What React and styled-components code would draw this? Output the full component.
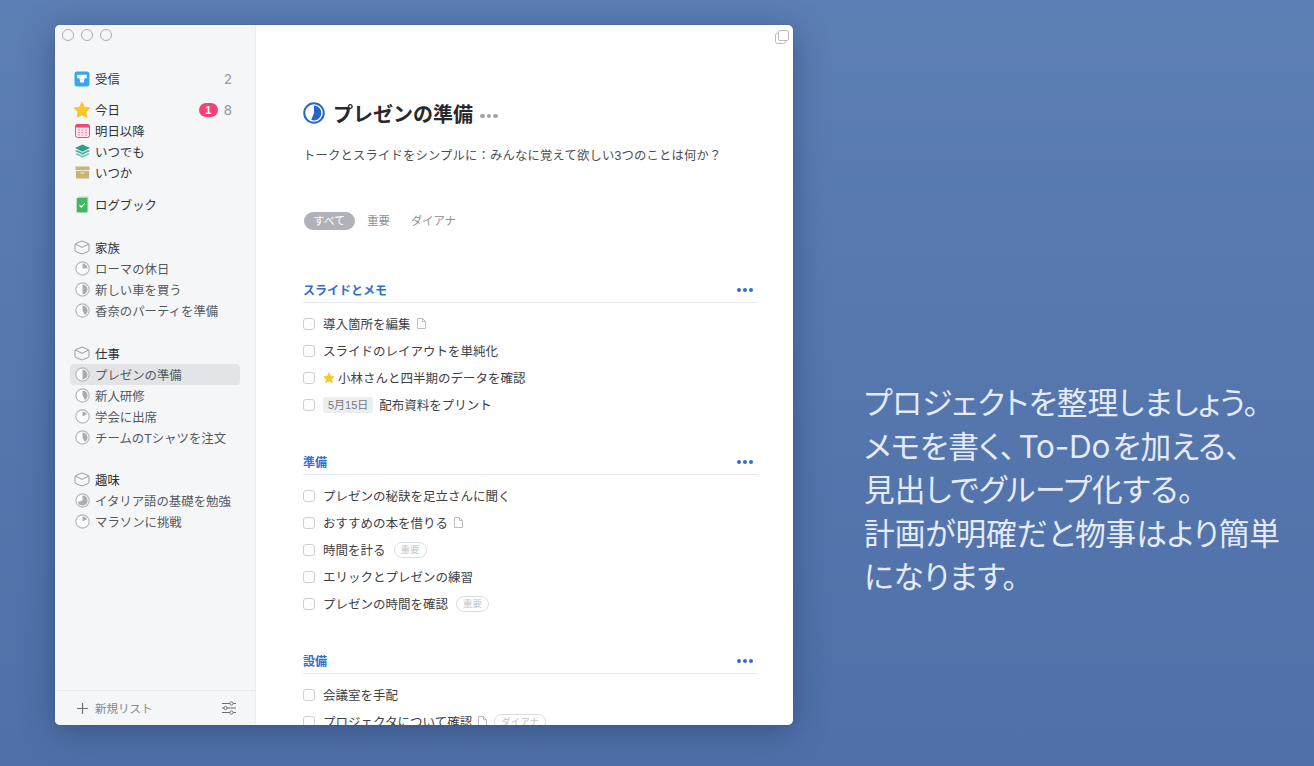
import React from 'react';
import styled, { createGlobalStyle } from 'styled-components';

const GlobalStyle = createGlobalStyle`
    html, body {
        margin: 0;
        padding: 0;
        height: 100%;
        overflow: hidden;
    }
    body {
        font-family: "Liberation Sans", "Noto Sans CJK JP", sans-serif;
        background: linear-gradient(180deg, #5c7fb4 0%, #5476ad 55%, #4f70a8 100%);
    }
`;

const Page = styled.div`
    display: flex;
    align-items: flex-start;
    gap: 71px;
    height: 766px;
    padding: 25px 0 0 55px;
    box-sizing: border-box;
`;

const Window = styled.div`
    position: relative;
    display: flex;
    flex: none;
    width: 738px;
    height: 700px;
    border-radius: 5px;
    overflow: hidden;
    background: #fff;
    box-shadow: 0 6px 34px rgba(24, 44, 88, 0.42), 0 0 1px rgba(24, 44, 88, 0.5);
`;

const Sidebar = styled.aside`
    display: flex;
    flex-direction: column;
    flex: none;
    width: 201px;
    box-sizing: border-box;
    background: #f5f6f8;
    border-right: 1px solid #eceef0;
`;

const TrafficLights = styled.div`
    display: flex;
    gap: 7px;
    padding: 4px 0 0 7px;
`;

const Light = styled.span`
    width: 12px;
    height: 12px;
    box-sizing: border-box;
    border: 1px solid #a9adb3;
    border-radius: 50%;
`;

const Nav = styled.nav`
    flex: 1;
    padding: 27px 15px 0;
`;

const Group = styled.div`
    margin-top: ${(p) => p.$gap || 0}px;
`;

const Row = styled.div`
    display: flex;
    align-items: center;
    gap: 4px;
    height: 21px;
    padding: 0 8px 0 3px;
    border-radius: 4px;
    font-size: 12.4px;
    color: ${(p) => (p.$strong ? '#2f3236' : '#55585d')};
    background: ${(p) => (p.$active ? '#e2e4e8' : 'transparent')};
`;

const IconSlot = styled.span`
    display: flex;
    justify-content: center;
    align-items: center;
    flex: none;
    width: 18px;
    height: 18px;
`;

const RowLabel = styled.span`
    flex: 1;
    white-space: nowrap;
`;

const Badge = styled.span`
    width: 19px;
    height: 14px;
    margin-right: 2px;
    border-radius: 7px;
    background: #f5417a;
    color: #fff;
    font-size: 11px;
    font-weight: 700;
    line-height: 14px;
    text-align: center;
`;

const Count = styled.span`
    font-family: "Inter", sans-serif;
    color: #a0a3a8;
    font-size: 13px;
    font-weight: 500;
`;

const SidebarFooter = styled.div`
    display: flex;
    align-items: center;
    justify-content: space-between;
    height: 34px;
    padding: 0 19px 0 22px;
    border-top: 1px solid #e9ebee;
`;

const NewList = styled.div`
    display: flex;
    align-items: center;
    gap: 7px;
    font-size: 11.5px;
    color: #85888d;
`;

const Main = styled.main`
    flex: 1;
    min-width: 0;
    padding: 74px 35px 0 47px;
    overflow: hidden;
`;

const CopyButton = styled.span`
    position: absolute;
    top: 5px;
    right: 4px;
    display: flex;
`;

const TitleRow = styled.div`
    display: flex;
    align-items: center;
    height: 28px;
`;

const Title = styled.h1`
    margin: 0 7px 0 8px;
    font-size: 20px;
    font-weight: 700;
    color: #26282c;
    white-space: nowrap;
`;

const TitleMore = styled.span`
    display: flex;
    margin-top: 6px;
`;

const Notes = styled.p`
    margin: 19px 0 0;
    font-size: 12.3px;
    line-height: 20px;
    letter-spacing: 0.2px;
    color: #4a4d52;
    white-space: nowrap;
`;

const Tags = styled.div`
    display: flex;
    align-items: center;
    gap: 4px;
    height: 18px;
    margin-top: 46px;
    padding-left: 1px;
`;

const FilterTag = styled.span`
    height: 18px;
    padding: 0 ${(p) => (p.$active ? 9.5 : 8.5)}px;
    border-radius: 9px;
    font-size: ${(p) => (p.$active ? 11 : 11.3)}px;
    line-height: 18px;
    color: ${(p) => (p.$active ? '#fff' : '#8d9095')};
    background: ${(p) => (p.$active ? '#b0b2b8' : 'transparent')};
`;

const Section = styled.section`
    margin-top: ${(p) => p.$gap}px;
`;

const SectionHead = styled.div`
    display: flex;
    align-items: center;
    justify-content: space-between;
    height: 21px;
    padding: 0 5px 2px 0;
    border-bottom: 1px solid #e8e9eb;
`;

const SectionTitle = styled.h2`
    margin: 0;
    font-size: 12px;
    font-weight: 700;
    color: #2f6fd0;
`;

const List = styled.ul`
    margin: 7px 0 0;
    padding: 0;
    list-style: none;
`;

const Item = styled.li`
    display: flex;
    align-items: center;
    height: 27px;
    font-size: 12.5px;
    color: #3d4045;
    white-space: nowrap;
`;

const Check = styled.span`
    flex: none;
    width: 12px;
    height: 12px;
    margin-right: 8px;
    box-sizing: border-box;
    border: 1px solid #cdcfd3;
    border-radius: 3px;
    background: #fdfdfd;
`;

const DatePill = styled.span`
    height: 16px;
    padding: 0 5px;
    margin-right: 6px;
    border-radius: 3px;
    background: #eceef0;
    color: #75787d;
    font-size: 11px;
    line-height: 16px;
`;

const OutlineTag = styled.span`
    height: 14px;
    padding: 0 6px;
    margin-left: ${(p) => (p.$tight ? 7 : 8)}px;
    border: 1px solid #dcdde0;
    border-radius: 8px;
    color: #c2c4c8;
    font-size: 9.5px;
    line-height: 14px;
`;

const NoteMark = styled.span`
    display: flex;
    margin-left: 6px;
`;

const StarMark = styled.span`
    display: flex;
    margin-right: 3px;
`;

const Dots = styled.span`
    display: flex;
    gap: ${(p) => p.$gap}px;
`;

const Dot = styled.i`
    width: ${(p) => p.$size}px;
    height: ${(p) => p.$size}px;
    border-radius: 50%;
    background: ${(p) => p.$color};
`;

const Hero = styled.div`
    padding-top: 356px;
    font-family: "Inter", "Noto Sans CJK JP", sans-serif;
    font-size: 30.7px;
    font-weight: 400;
    line-height: 43.5px;
    font-feature-settings: "palt";
    color: #e4ebf7;
    white-space: nowrap;
`;

const HeroLatin = styled.span`
    font-size: 31.5px;
    letter-spacing: -0.2px;
    margin: 0 2px 0 3px;
`;

const MoreDots = ({ size = 4, gap = 2, color = '#2f6fd0' }) => (
    <Dots $gap={gap}>
        <Dot $size={size} $color={color} />
        <Dot $size={size} $color={color} />
        <Dot $size={size} $color={color} />
    </Dots>
);

const piePath = (cx, cy, r, f) => {
    const a = f * Math.PI * 2;
    const x = cx + r * Math.sin(a);
    const y = cy - r * Math.cos(a);
    return `M${cx} ${cy}V${cy - r}A${r} ${r} 0 ${f > 0.5 ? 1 : 0} 1 ${x.toFixed(2)} ${y.toFixed(2)}Z`;
};

const Pie = ({ value, size = 15, color = '#a9acb1', ring = '#b3b6ba', width = 1.1 }) => (
    <svg width={size} height={size} viewBox="0 0 14 14">
        <circle cx="7" cy="7" r="6.2" fill="#fff" stroke={ring} strokeWidth={width} />
        <path d={piePath(7, 7, 4.7, value)} fill={color} />
    </svg>
);

const InboxIcon = () => (
    <svg width="16" height="16" viewBox="0 0 15 15">
        <rect x="0.5" y="0.5" width="14" height="14" rx="2.5" fill="#39a6ee" />
        <path d="M3 3.5h9v3.2H9.8v1.5H5.2V6.7H3z" fill="#fff" />
        <path d="M5.6 8.2h3.8v2.6H5.6z" fill="#fff" />
    </svg>
);

const StarIcon = ({ size = 18 }) => (
    <svg width={size} height={size} viewBox="0 0 17 17">
        <path
            d="M8.5 1.2l2.2 4.7 5.1.7-3.7 3.5.9 5.1-4.5-2.5-4.5 2.5.9-5.1L1.2 6.6l5.1-.7z"
            fill="#f8c827"
            stroke="#f8c827"
            strokeLinejoin="round"
        />
    </svg>
);

const CalendarIcon = () => (
    <svg width="15" height="14" viewBox="0 0 15 14">
        <rect x="0.5" y="0.5" width="14" height="13" rx="2" fill="#fde7ee" stroke="#f2467a" />
        <rect x="0.5" y="0.5" width="14" height="3" rx="1.2" fill="#f2467a" />
        <path d="M3 6h2M6.5 6h2M10 6h2M3 8.5h2M6.5 8.5h2M10 8.5h2M3 11h2M6.5 11h2M10 11h2" stroke="#f2809f" />
    </svg>
);

const LayersIcon = () => (
    <svg width="17" height="15" viewBox="0 0 16 15">
        <path d="M8 .5l7.5 3.6L8 7.8.5 4.1z" fill="#2f9c8c" />
        <path d="M2.3 6L.5 7l7.5 3.7L15.5 7l-1.8-1L8 8.8z" fill="#4fae9f" />
        <path d="M2.3 9L.5 10 8 13.8l7.5-3.8-1.8-1L8 11.8z" fill="#7fc7ba" />
    </svg>
);

const ArchiveIcon = () => (
    <svg width="15" height="13" viewBox="0 0 15 13">
        <rect x="0.5" y="0.5" width="14" height="3.6" fill="#c6b672" />
        <rect x="1" y="5" width="13" height="7.5" fill="#c6b672" />
        <rect x="5.5" y="6.3" width="4" height="1.2" fill="#f0e9c9" />
    </svg>
);

const LogbookIcon = () => (
    <svg width="15" height="17" viewBox="0 0 14 16">
        <path d="M3 .5h9.5v14H3z" fill="#a9dbb3" />
        <path d="M1.5 1.8h10v13.7h-10z" fill="#46b566" />
        <path d="M4.2 8.5l1.8 2 3.2-3.8" fill="none" stroke="#fff" strokeWidth="1" />
    </svg>
);

const CubeIcon = () => (
    <svg width="16" height="15" viewBox="0 0 16 15" fill="none" stroke="#9a9da2" strokeWidth="1" strokeLinejoin="round">
        <path d="M8 1L14 3.4C14.8 3.8 15 4.2 15 5V10C15 10.8 14.8 11.2 14 11.6L8 14 2 11.6C1.2 11.2 1 10.8 1 10V5C1 4.2 1.2 3.8 2 3.4Z" />
        <path d="M1.4 4L8 7.4 14.6 4" />
    </svg>
);

const PlusIcon = () => (
    <svg width="11" height="11" viewBox="0 0 11 11">
        <path d="M5.5 0v11M0 5.5h11" stroke="#6c6f74" strokeWidth="1.2" />
    </svg>
);

const SlidersIcon = () => (
    <svg width="14" height="14" viewBox="0 0 14 14" fill="#f5f6f8" stroke="#6f7277" strokeWidth="1">
        <path d="M0 2.5h14M0 7h14M0 11.5h14" />
        <circle cx="9.5" cy="2.5" r="1.6" />
        <circle cx="3.5" cy="7" r="1.6" />
        <circle cx="9.5" cy="11.5" r="1.6" />
    </svg>
);

const CopyIcon = () => (
    <svg width="14" height="14" viewBox="0 0 14 14" fill="#fff" stroke="#b9bbbf" strokeWidth="1">
        <rect x="0.5" y="3" width="10" height="10.5" rx="2" />
        <rect x="3.5" y="0.5" width="10" height="10" rx="1.5" />
    </svg>
);

const DocIcon = () => (
    <svg width="9" height="11" viewBox="0 0 9 11" fill="none" stroke="#bcbec2" strokeWidth="1">
        <path d="M.5.5h5l3 3v7h-8z" />
        <path d="M5.5.5v3h3" />
    </svg>
);

const areas = [
    {
        name: '家族',
        gap: 22,
        projects: [
            ['ローマの休日', 0.25],
            ['新しい車を買う', 0.5],
            ['香奈のパーティを準備', 0.42],
        ],
    },
    {
        name: '仕事',
        gap: 22,
        projects: [
            ['プレゼンの準備', 0.5, true],
            ['新人研修', 0.42],
            ['学会に出席', 0.18],
            ['チームのTシャツを注文', 0.42],
        ],
    },
    {
        name: '趣味',
        gap: 21,
        projects: [
            ['イタリア語の基礎を勉強', 0.7],
            ['マラソンに挑戦', 0.18],
        ],
    },
];

const sections = [
    {
        title: 'スライドとメモ',
        gap: 49,
        items: [
            { text: '導入箇所を編集', doc: true },
            { text: 'スライドのレイアウトを単純化' },
            { text: '小林さんと四半期のデータを確認', star: true },
            { text: '配布資料をプリント', date: '5月15日' },
        ],
    },
    {
        title: '準備',
        gap: 33,
        items: [
            { text: 'プレゼンの秘訣を足立さんに聞く' },
            { text: 'おすすめの本を借りる', doc: true },
            { text: '時間を計る', tag: '重要' },
            { text: 'エリックとプレゼンの練習' },
            { text: 'プレゼンの時間を確認', tag: '重要' },
        ],
    },
    {
        title: '設備',
        gap: 33,
        items: [
            { text: '会議室を手配' },
            { text: 'プロジェクタについて確認', doc: true, tag: 'ダイアナ' },
        ],
    },
];

const SideRow = ({ icon, label, strong, active, children }) => (
    <Row $strong={strong} $active={active}>
        <IconSlot>{icon}</IconSlot>
        <RowLabel>{label}</RowLabel>
        {children}
    </Row>
);

export default function App() {
    return (
        <>
            <GlobalStyle />
            <Page>
                <Window>
                    <Sidebar>
                        <TrafficLights>
                            <Light />
                            <Light />
                            <Light />
                        </TrafficLights>
                        <Nav>
                            <Group>
                                <SideRow icon={<InboxIcon />} label="受信" strong>
                                    <Count>2</Count>
                                </SideRow>
                            </Group>
                            <Group $gap={10}>
                                <SideRow icon={<StarIcon />} label="今日" strong>
                                    <Badge>1</Badge>
                                    <Count>8</Count>
                                </SideRow>
                                <SideRow icon={<CalendarIcon />} label="明日以降" strong />
                                <SideRow icon={<LayersIcon />} label="いつでも" strong />
                                <SideRow icon={<ArchiveIcon />} label="いつか" strong />
                            </Group>
                            <Group $gap={11}>
                                <SideRow icon={<LogbookIcon />} label="ログブック" strong />
                            </Group>
                            {areas.map((area) => (
                                <Group key={area.name} $gap={area.gap}>
                                    <SideRow icon={<CubeIcon />} label={area.name} strong />
                                    {area.projects.map(([name, value, active]) => (
                                        <SideRow key={name} icon={<Pie value={value} />} label={name} active={active} />
                                    ))}
                                </Group>
                            ))}
                        </Nav>
                        <SidebarFooter>
                            <NewList>
                                <PlusIcon />
                                新規リスト
                            </NewList>
                            <SlidersIcon />
                        </SidebarFooter>
                    </Sidebar>
                    <Main>
                        <CopyButton>
                            <CopyIcon />
                        </CopyButton>
                        <TitleRow>
                            <Pie value={0.56} size={22} color="#2566c8" ring="#2566c8" width={1.3} />
                            <Title>プレゼンの準備</Title>
                            <TitleMore>
                                <MoreDots size={4.5} gap={2} color="#a4a6ab" />
                            </TitleMore>
                        </TitleRow>
                        <Notes>トークとスライドをシンプルに：みんなに覚えて欲しい3つのことは何か？</Notes>
                        <Tags>
                            <FilterTag $active>すべて</FilterTag>
                            <FilterTag>重要</FilterTag>
                            <FilterTag>ダイアナ</FilterTag>
                        </Tags>
                        {sections.map((section) => (
                            <Section key={section.title} $gap={section.gap}>
                                <SectionHead>
                                    <SectionTitle>{section.title}</SectionTitle>
                                    <MoreDots />
                                </SectionHead>
                                <List>
                                    {section.items.map((item) => (
                                        <Item key={item.text}>
                                            <Check />
                                            {item.star && (
                                                <StarMark>
                                                    <StarIcon size={12} />
                                                </StarMark>
                                            )}
                                            {item.date && <DatePill>{item.date}</DatePill>}
                                            {item.text}
                                            {item.doc && (
                                                <NoteMark>
                                                    <DocIcon />
                                                </NoteMark>
                                            )}
                                            {item.tag && <OutlineTag $tight={item.doc}>{item.tag}</OutlineTag>}
                                        </Item>
                                    ))}
                                </List>
                            </Section>
                        ))}
                    </Main>
                </Window>
                <Hero>
                    プロジェクトを整理しましょう。
                    <br />
                    メモを書く、<HeroLatin>To-Do</HeroLatin>を加える、
                    <br />
                    見出しでグループ化する。
                    <br />
                    計画が明確だと物事はより簡単
                    <br />
                    になります。
                </Hero>
            </Page>
        </>
    );
}
